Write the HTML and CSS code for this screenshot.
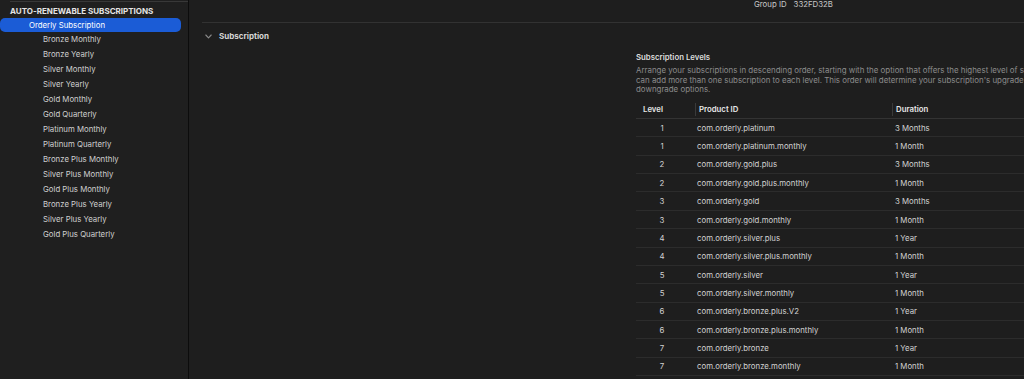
FILE: index.html
```html
<!DOCTYPE html>
<html lang="en">
<head>
  <meta charset="UTF-8" />
  <title>Subscriptions</title>
  <link rel="stylesheet" href="styles.css">
</head>
<body>
  <div class="app">
    <div class="sidebar">
      <div class="rule"></div>
      <div class="section-title">AUTO-RENEWABLE SUBSCRIPTIONS</div>
      <div class="group selected">Orderly Subscription</div>
      <div class="item">Bronze Monthly</div>
      <div class="item">Bronze Yearly</div>
      <div class="item">Silver Monthly</div>
      <div class="item">Silver Yearly</div>
      <div class="item">Gold Monthly</div>
      <div class="item">Gold Quarterly</div>
      <div class="item">Platinum Monthly</div>
      <div class="item">Platinum Quarterly</div>
      <div class="item">Bronze Plus Monthly</div>
      <div class="item">Silver Plus Monthly</div>
      <div class="item">Gold Plus Monthly</div>
      <div class="item">Bronze Plus Yearly</div>
      <div class="item">Silver Plus Yearly</div>
      <div class="item">Gold Plus Quarterly</div>
    </div>

    <div class="main">
      <div class="group-bar">
        <span class="label">Group ID</span>
        <span class="value">332FD32B</span>
      </div>

      <div class="section-head">
        <svg class="chevron" width="7" height="5" viewBox="0 0 7 5">
          <polyline points="0.8,1 3.5,3.8 6.2,1" fill="none" stroke="#8a8a8a" stroke-width="1.1" stroke-linecap="round" stroke-linejoin="round"/>
        </svg>
        <span>Subscription</span>
      </div>

      <div class="levels">
        <div class="levels-title">Subscription Levels</div>
        <div class="levels-desc">
          <div>Arrange your subscriptions in descending order, starting with the option that offers the highest level of service. You</div>
          <div>can add more than one subscription to each level. This order will determine your subscription's upgrade and</div>
          <div>downgrade options.</div>
        </div>

        <div class="table">
          <div class="row head">
            <div class="c-level">Level</div>
            <div class="c-id"><span class="sep"></span>Product ID</div>
            <div class="c-dur"><span class="sep"></span>Duration</div>
          </div>
          <div class="row"><div class="c-level">1</div><div class="c-id">com.orderly.platinum</div><div class="c-dur">3 Months</div></div>
          <div class="row"><div class="c-level">1</div><div class="c-id">com.orderly.platinum.monthly</div><div class="c-dur">1 Month</div></div>
          <div class="row"><div class="c-level">2</div><div class="c-id">com.orderly.gold.plus</div><div class="c-dur">3 Months</div></div>
          <div class="row"><div class="c-level">2</div><div class="c-id">com.orderly.gold.plus.monthly</div><div class="c-dur">1 Month</div></div>
          <div class="row"><div class="c-level">3</div><div class="c-id">com.orderly.gold</div><div class="c-dur">3 Months</div></div>
          <div class="row"><div class="c-level">3</div><div class="c-id">com.orderly.gold.monthly</div><div class="c-dur">1 Month</div></div>
          <div class="row"><div class="c-level">4</div><div class="c-id">com.orderly.silver.plus</div><div class="c-dur">1 Year</div></div>
          <div class="row"><div class="c-level">4</div><div class="c-id">com.orderly.silver.plus.monthly</div><div class="c-dur">1 Month</div></div>
          <div class="row"><div class="c-level">5</div><div class="c-id">com.orderly.silver</div><div class="c-dur">1 Year</div></div>
          <div class="row"><div class="c-level">5</div><div class="c-id">com.orderly.silver.monthly</div><div class="c-dur">1 Month</div></div>
          <div class="row"><div class="c-level">6</div><div class="c-id">com.orderly.bronze.plus.V2</div><div class="c-dur">1 Year</div></div>
          <div class="row"><div class="c-level">6</div><div class="c-id">com.orderly.bronze.plus.monthly</div><div class="c-dur">1 Month</div></div>
          <div class="row"><div class="c-level">7</div><div class="c-id">com.orderly.bronze</div><div class="c-dur">1 Year</div></div>
          <div class="row"><div class="c-level">7</div><div class="c-id">com.orderly.bronze.monthly</div><div class="c-dur">1 Month</div></div>
        </div>
      </div>
    </div>
  </div>
</body>
</html>
```

FILE: styles.css
```css
body {
  margin: 0;
  background-color: #1e1e1e;
  color: #d2d2d2;
  font-family: 'Inter', 'Liberation Sans', sans-serif;
  font-size: 7.8px;
  overflow: hidden;
  height: 379px;
}

.app {
  display: flex;
  height: 379px;
}

/* sidebar */
.sidebar {
  width: 188px;
  flex-shrink: 0;
  background-color: #1f1f1f;
  border-right: 1px solid #0c0c0c;
  padding-top: 1px;
}

.rule {
  height: 1px;
  margin-left: 10px;
  background-color: #383838;
}

.section-title {
  padding: 2px 0 0 10px;
  height: 14px;
  line-height: 14px;
  font-size: 8px;
  font-weight: 700;
  color: #e4e4e4;
}

.group {
  height: 14px;
  line-height: 14px;
  padding-left: 29px;
  margin-right: 7px;
  border-radius: 5px;
  color: #e8e8e8;
}

.selected {
  background-color: #1b5cd6;
  color: #ffffff;
}

.item {
  height: 15px;
  line-height: 15px;
  padding-left: 43px;
  color: #cfcfcf;
}

/* main panel */
.main {
  flex: 1;
  overflow: hidden;
}

.group-bar {
  height: 22px;
  margin-left: 13px;
  padding-left: 552px;
  border-bottom: 1px solid #323232;
  display: flex;
  gap: 7px;
  color: #c8c8c8;
}

.group-bar span {
  line-height: 8px;
  margin-top: -0.5px;
}

.section-head {
  height: 26px;
  display: flex;
  align-items: center;
  gap: 7px;
  padding-left: 16px;
  font-size: 8px;
  font-weight: 700;
  color: #d6d6d6;
}

.levels {
  margin-left: 447px;
  padding-top: 3px;
  white-space: nowrap;
}

.levels-title {
  line-height: 10px;
  font-weight: 600;
  color: #dcdcdc;
}

.levels-desc {
  margin: 4px 0 5px;
  line-height: 9.7px;
  font-size: 7.9px;
  color: #8c8c8c;
}

.row {
  display: grid;
  grid-template-columns: 59px 197px 1fr;
  align-items: center;
  height: 18.35px;
  box-sizing: border-box;
  border-bottom: 1px solid #2c2c2c;
}

.row.head {
  height: 19px;
  border-bottom-color: #333333;
  font-weight: 600;
  color: #e6e6e6;
}

.c-level {
  text-align: center;
  padding-right: 7px;
}

.head .c-level {
  text-align: left;
  padding-left: 7px;
}

.c-id {
  padding-left: 2px;
}

.c-dur {
  padding-left: 3px;
}

.head .c-id,
.head .c-dur {
  display: flex;
  align-items: center;
  padding-left: 0;
}

.sep {
  width: 1px;
  height: 13px;
  background-color: #3a3a3a;
  margin-right: 3px;
}
```
